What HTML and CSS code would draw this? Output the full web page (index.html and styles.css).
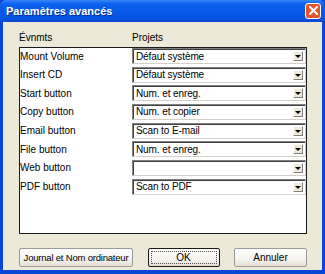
FILE: index.html
```html
<html>
<head>
<link rel="stylesheet" href="styles.css">
</head>
<body>
<div class="window">
	<div class="titlebar">
		<span class="title">Paramètres avancés</span>
		<span class="close">
			<svg width="9" height="9" viewBox="0 0 9 9"><path d="M1 1 L8 8 M8 1 L1 8" stroke="#fff" stroke-width="2" stroke-linecap="square"/></svg>
		</span>
	</div>
	<div class="content">
		<div class="heads">
			<span class="col1">Évnmts</span>
			<span>Projets</span>
		</div>
		<div class="list">
			<span class="label">Mount Volume</span>
			<span class="combo"><span class="value">Défaut système</span><span class="drop"></span></span>
			<span class="label">Insert CD</span>
			<span class="combo"><span class="value">Défaut système</span><span class="drop"></span></span>
			<span class="label">Start button</span>
			<span class="combo"><span class="value">Num. et enreg.</span><span class="drop"></span></span>
			<span class="label">Copy button</span>
			<span class="combo"><span class="value">Num. et copier</span><span class="drop"></span></span>
			<span class="label">Email button</span>
			<span class="combo"><span class="value">Scan to E-mail</span><span class="drop"></span></span>
			<span class="label">File button</span>
			<span class="combo"><span class="value">Num. et enreg.</span><span class="drop"></span></span>
			<span class="label">Web button</span>
			<span class="combo"><span class="value"></span><span class="drop"></span></span>
			<span class="label">PDF button</span>
			<span class="combo"><span class="value">Scan to PDF</span><span class="drop"></span></span>
		</div>
		<div class="buttons">
			<span class="btn wide">Journal et Nom ordinateur</span>
			<span class="btn default"><span class="focus">OK</span></span>
			<span class="btn">Annuler</span>
		</div>
	</div>
</div>
</body>
</html>
```

FILE: styles.css
```css
body {
    margin: 0;
    font-family: "Liberation Sans", Arial, sans-serif;
    font-size: 10px;
}

.window {
    width: 325px;
    height: 274px;
    box-sizing: border-box;
    background: #0846d8;
    display: flex;
    flex-direction: column;
    padding: 0 3px 4px 3px;
}

.titlebar {
    height: 22px;
    margin: 0 -3px;
    padding: 0 4px 0 6px;
    display: flex;
    align-items: center;
    justify-content: space-between;
    background: linear-gradient(#3a86f8 0%, #0c62ee 18%, #0558e6 60%, #0654e2 85%, #0848cc 100%);
    border-radius: 6px 6px 0 0;
}

.title {
    color: #fff;
    font-weight: bold;
    font-size: 11px;
    text-shadow: 1px 1px #0a2c8c;
}

.close {
    width: 16px;
    height: 16px;
    box-sizing: border-box;
    border: 1px solid #fff;
    border-radius: 3px;
    background: #e2552e;
    display: flex;
    align-items: center;
    justify-content: center;
    margin-bottom: 1px;
}

.content {
    flex: 1;
    background: #ece9d8;
    padding: 0 15px 0 16px;
    display: flex;
    flex-direction: column;
}

.heads {
    display: flex;
    height: 25px;
    align-items: center;
    padding-top: 5px;
    box-sizing: border-box;
    color: #000;
}

.heads .col1 {
    width: 113px;
}

.list {
    height: 187px;
    box-sizing: border-box;
    border: 1px solid #1a1a1a;
    background: #fff;
    display: grid;
    grid-template-columns: 112px 174px;
    grid-auto-rows: 18.67px;
    align-content: start;
}

.label {
    display: flex;
    align-items: center;
    height: 16px;
    color: #000;
}

.combo {
    height: 16px;
    box-sizing: border-box;
    border-top: 1px solid #808080;
    border-left: 1px solid #808080;
    border-right: 1px solid #d4d0c8;
    border-bottom: 1px solid #d4d0c8;
    box-shadow: inset 1px 1px 0 #404040;
    display: flex;
    align-items: center;
    padding: 1px 1px 1px 3px;
    letter-spacing: -0.1px;
}

.value {
    flex: 1;
}

.drop {
    width: 10px;
    height: 10px;
    box-sizing: border-box;
    margin-right: 1px;
    background: #ece9d8;
    border-top: 1px solid #fff;
    border-left: 1px solid #fff;
    border-right: 1px solid #808080;
    border-bottom: 1px solid #808080;
    position: relative;
}

.drop::after {
    content: "";
    position: absolute;
    left: 1px;
    top: 3px;
    border-left: 3px solid transparent;
    border-right: 3px solid transparent;
    border-top: 3px solid #000;
}

.buttons {
    display: flex;
    justify-content: space-between;
    margin-top: 14px;
}

.btn {
    width: 73px;
    height: 19px;
    box-sizing: border-box;
    border: 1px solid #9a9a9a;
    border-radius: 2px;
    background: linear-gradient(#ffffff, #f4f3ee 60%, #e2dfd2);
    display: flex;
    align-items: center;
    justify-content: center;
    color: #000;
    white-space: nowrap;
}

.btn.wide {
    width: 114px;
    font-size: 9.5px;
    letter-spacing: -0.2px;
}

.btn.default {
    width: 72px;
    border: 1px solid #1a1a1a;
    padding: 2px;
}

.focus {
    flex: 1;
    align-self: stretch;
    display: flex;
    align-items: center;
    justify-content: center;
    border: 1px dotted #555;
}
```
